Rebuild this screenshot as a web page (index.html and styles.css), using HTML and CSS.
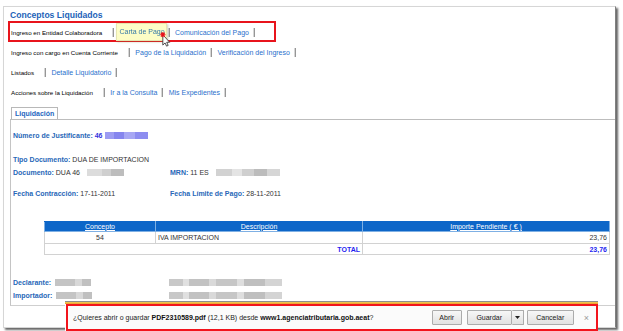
FILE: index.html
```html
<!DOCTYPE html>
<html lang="es">
<head>
<meta charset="utf-8">
<title>Conceptos Liquidados</title>
<link rel="stylesheet" href="styles.css">
</head>
<body>
<div class="frame">
  <h1 class="title">Conceptos Liquidados</h1>

  <div class="nav-row nav-row--marked">
    <span class="nav-label">Ingreso en Entidad Colaboradora</span>
    <span class="sep">|</span>
    <a class="nav-link nav-link--hover">Carta de Pago<svg class="cursor" width="11" height="15" viewBox="0 0 10 14"><path d="M2.5 2.5 L2.5 12.2 L4.6 10.2 L6 13.2 L7.5 12.5 L6.1 9.6 L8.9 9.6 Z" fill="#fff" stroke="#333" stroke-width="0.8" stroke-linejoin="round"/><path d="M0 2.5h5 M2.5 0v5 M0.7 0.7l3.6 3.6 M4.3 0.7l-3.6 3.6" stroke="#e8101a" stroke-width="1"/></svg></a>
    <span class="sep">|</span>
    <a class="nav-link">Comunicación del Pago</a>
    <span class="sep">|</span>
  </div>

  <div class="nav-row">
    <span class="nav-label">Ingreso con cargo en Cuenta Corriente</span>
    <span class="sep">|</span>
    <a class="nav-link">Pago de la Liquidación</a>
    <span class="sep">|</span>
    <a class="nav-link">Verificación del Ingreso</a>
    <span class="sep">|</span>
  </div>

  <div class="nav-row">
    <span class="nav-label">Listados</span>
    <span class="sep">|</span>
    <a class="nav-link">Detalle Liquidatorio</a>
    <span class="sep">|</span>
  </div>

  <div class="nav-row">
    <span class="nav-label">Acciones sobre la Liquidación</span>
    <span class="sep">|</span>
    <a class="nav-link">Ir a la Consulta</a>
    <span class="sep">|</span>
    <a class="nav-link">Mis Expedientes</a>
    <span class="sep">|</span>
  </div>

  <div class="tabs">
    <span class="tab">Liquidación</span>
  </div>
  <div class="panel">
    <div class="field"><span class="flabel">Número de Justificante:</span> <span class="fvalue-id">46</span><span class="blur blur--id"></span></div>

    <div class="group group--doc">
      <div class="field"><span class="flabel">Tipo Documento:</span> DUA DE IMPORTACION</div>
      <div class="grid2">
        <div class="field"><span class="flabel">Documento:</span> DUA 46<span class="blur blur--doc"></span></div>
        <div class="field"><span class="flabel">MRN:</span> 11 ES<span class="blur blur--mrn"></span></div>
      </div>
    </div>

    <div class="grid2 group group--fechas">
      <div class="field"><span class="flabel">Fecha Contracción:</span> 17-11-2011</div>
      <div class="field"><span class="flabel">Fecha Límite de Pago:</span> 28-11-2011</div>
    </div>

    <table class="conceptos">
      <colgroup><col class="col1"><col class="col2"><col class="col3"></colgroup>
      <thead>
        <tr><th><a>Concepto</a></th><th><a>Descripción</a></th><th><a>Importe Pendiente ( € )</a></th></tr>
      </thead>
      <tbody>
        <tr class="row-data"><td class="center">54</td><td>IVA IMPORTACION</td><td class="num">23,76</td></tr>
        <tr class="row-total"><td colspan="2" class="num">TOTAL</td><td class="num">23,76</td></tr>
      </tbody>
    </table>

    <div class="group group--people">
      <div class="grid2">
        <div class="field"><span class="flabel">Declarante:</span><span class="blur blur--name"></span></div>
        <div class="field"><span class="blur blur--addr"></span></div>
      </div>
      <div class="grid2">
        <div class="field"><span class="flabel">Importador:</span><span class="blur blur--name"></span></div>
        <div class="field"><span class="blur blur--addr"></span></div>
      </div>
    </div>
  </div>
</div>

<div class="dlbar">
  <div class="dlbar-accent"></div>
  <div class="dlbar-box">
    <span class="dl-text">¿Quieres abrir o guardar <b>PDF2310589.pdf</b> (12,1 KB) desde <b>www1.agenciatributaria.gob.aeat</b>?</span>
    <div class="dl-actions">
      <button class="btn btn--open">Abrir</button>
      <span class="split">
        <button class="btn btn--save">Guardar</button><button class="btn btn--drop"><svg width="5" height="3" viewBox="0 0 5 3"><path d="M0 0h5L2.5 3z" fill="#222"/></svg></button>
      </span>
      <button class="btn btn--cancel">Cancelar</button>
      <span class="dl-close">×</span>
    </div>
  </div>
</div>
</body>
</html>
```

FILE: styles.css
```css
* { box-sizing: border-box; }
html, body { margin: 0; padding: 0; }
body {
  width: 623px;
  height: 331px;
  overflow: hidden;
  background: #fff;
  font-family: "Liberation Sans", Arial, sans-serif;
  color: #222;
  position: relative;
}

.frame {
  margin: 6px 0 0 3px;
  width: 613px;
  height: 322px;
  border: 1px solid #d6d6d6;
  border-right: 1px solid #808080;
  box-shadow: 2px 2px 2px #666;
  padding: 3px 0 0 6px;
  background: #fff;
}

.title {
  margin: 0;
  font-size: 8.6px;
  line-height: 11px;
  font-weight: bold;
  color: #1d62b8;
}

.nav-row {
  display: flex;
  align-items: center;
  height: 20px;
  padding-left: 1px;
  white-space: nowrap;
}
.nav-row--marked {
  margin-left: -2px;
  width: 268px;
  height: 21px;
  border: 2px solid #e8141c;
  padding-top: 1px;
}
.nav-label {
  font-size: 6.2px;
  color: #000;
  margin-right: 6px;
}
.sep {
  display: inline-block;
  font-size: 9px;
  line-height: 1;
  color: #3a3a3a;
  margin: 0 5px 0 4px;
  will-change: transform;
}
.nav-link {
  font-size: 7px;
  color: #2a6fcc;
  text-decoration: none;
}
.nav-link--hover {
  position: relative;
  margin-left: -4px;
  margin-right: -3px;
  padding: 3px 1px 3px 3px;
  line-height: 10px;
  color: #3579a8;
  background: #fdfdc6;
  border: 1px solid #e6e6b0;
  box-shadow: 1px 1px 2px rgba(120, 120, 60, 0.35);
}
.cursor {
  position: absolute;
  left: 43px;
  top: 8px;
}

.tabs {
  margin-top: 5px;
  padding-left: 1px;
  display: flex;
}
.tab {
  height: 12px;
  padding: 0 3px;
  font-size: 7px;
  line-height: 11px;
  font-weight: bold;
  color: #1f66c0;
  border: 1px solid #b8b8b8;
  border-bottom: none;
  background: #fff;
}
.panel {
  border-top: 1px solid #bdbdbd;
  border-left: 1px solid #c4c4c4;
  border-bottom: 1px solid #cfcfcf;
  padding: 9px 0 3px 2px;
}

.field {
  font-size: 7px;
  line-height: 13px;
  color: #333;
  white-space: nowrap;
}
.flabel {
  font-weight: bold;
  color: #2867b8;
}
.fvalue-id {
  font-weight: bold;
  color: #3333dd;
}
.grid2 {
  display: grid;
  grid-template-columns: 157px auto;
}
.group--doc { margin-top: 11px; }
.group--fechas { margin-top: 8px; }
.group--people { margin-top: 21px; }

.blur {
  display: inline-block;
  height: 7px;
  vertical-align: -1px;
  filter: blur(0.7px);
}
.blur--id {
  width: 43px;
  margin-left: 2px;
  background: linear-gradient(90deg, #9c9cf2 0 20%, #8585ee 20% 45%, #a7a7f4 45% 70%, #8d8df0 70% 100%);
}
.blur--doc {
  width: 37px;
  margin-left: 7px;
  background: linear-gradient(90deg, #dcdcdc 0 40%, #cfcfcf 40% 65%, #bdbdbd 65% 100%);
}
.blur--mrn {
  width: 64px;
  margin-left: 7px;
  background: linear-gradient(90deg, #d2d2d2 0 25%, #e4e4e4 25% 40%, #cfcfcf 40% 60%, #bcbcbc 60% 80%, #d6d6d6 80% 100%);
}
.blur--name {
  width: 36px;
  margin-left: 4px;
  background: linear-gradient(90deg, #c4c4c4 0 55%, #d8d8d8 55% 75%, #c0c0c0 75% 100%);
}
.blur--addr {
  width: 113px;
  margin-left: -1px;
  background: linear-gradient(90deg, #c8c8c8 0 12%, #e0e0e0 12% 18%, #c2c2c2 18% 35%, #d9d9d9 35% 42%, #c6c6c6 42% 60%, #dedede 60% 66%, #bfbfbf 66% 85%, #d4d4d4 85% 100%);
}

.conceptos {
  margin: 21px 0 0 31px;
  width: 565px;
  border-collapse: collapse;
  table-layout: fixed;
  font-size: 7px;
}
.col1 { width: 111px; }
.col2 { width: 207px; }
.col3 { width: 247px; }
.conceptos th {
  background: #0d66c8;
  color: #fff;
  font-weight: normal;
  height: 10px;
  line-height: 8px;
  padding: 0;
  border: 1px solid #7fb0e4;
  border-top-color: #0d66c8;
}
.conceptos th a {
  color: #fff;
  text-decoration: underline;
}
.conceptos td {
  border: 1px solid #d2d2d2;
  padding: 0 2px;
  color: #333;
}
.row-data td { height: 12px; line-height: 10px; }
.row-total td {
  height: 11px;
  line-height: 9px;
  font-weight: bold;
  color: #1f1ff0;
}
.center { text-align: center; }
.num { text-align: right; }

.dlbar {
  position: absolute;
  left: 65px;
  top: 301px;
  width: 533px;
  height: 30px;
  border-top: 1px solid #8e8e8e;
  background: #fff;
}
.dlbar-accent {
  height: 2px;
  background: linear-gradient(#ecd35a, #f0962a);
}
.dlbar-box {
  margin-left: 1px;
  height: 27px;
  border: 2px solid #f2141c;
  background: #fbfbfb;
  display: flex;
  align-items: center;
  padding: 0 7px 0 5px;
}
.dl-text {
  font-size: 7px;
  color: #222;
  white-space: nowrap;
}
.dl-text b { color: #111; }
.dl-actions {
  margin-left: auto;
  display: flex;
  align-items: center;
}
.btn {
  height: 15px;
  padding: 0;
  font-family: "Liberation Sans", Arial, sans-serif;
  font-size: 7px;
  color: #222;
  border: 1px solid #acacac;
  border-radius: 1px;
  background: linear-gradient(#f7f7f7, #e2e2e2);
}
.btn--open { width: 30px; }
.split { display: flex; margin-left: 5px; }
.btn--save { width: 45px; }
.btn--drop {
  width: 12px;
  border-left: none;
  display: flex;
  align-items: center;
  justify-content: center;
}
.btn--cancel { width: 47px; margin-left: 3px; }
.dl-close {
  margin-left: 10px;
  font-size: 9px;
  color: #9a9a9a;
}
```
